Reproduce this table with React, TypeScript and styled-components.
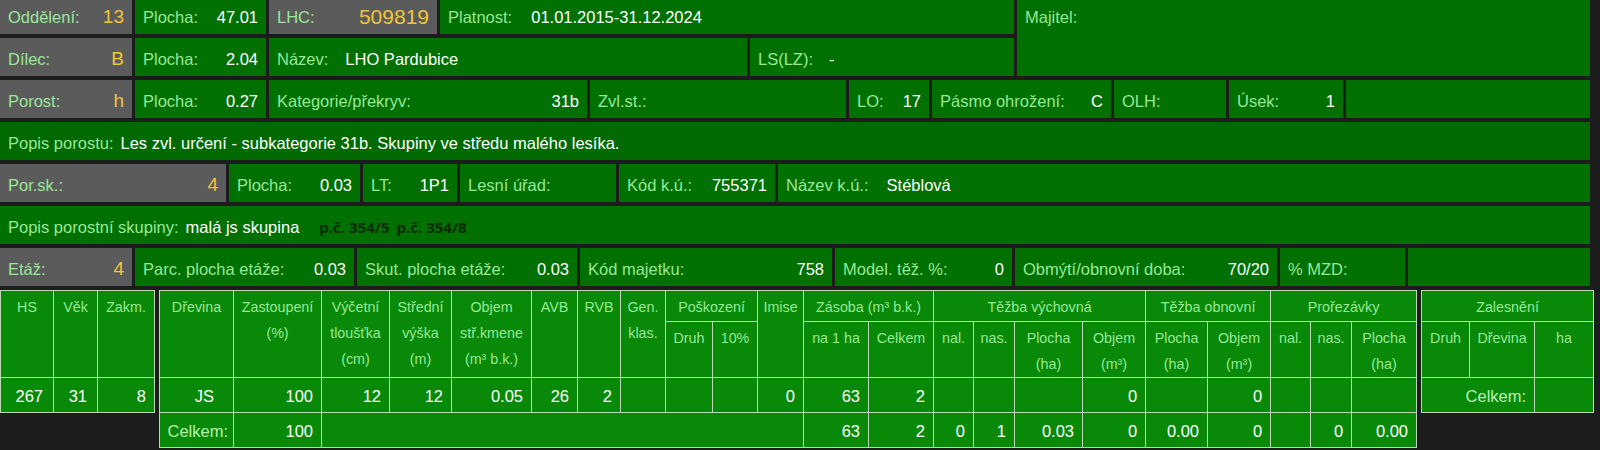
import React from 'react';
import styled, { createGlobalStyle } from 'styled-components';

const GlobalStyle = createGlobalStyle`
  html, body { margin: 0; padding: 0; background: #1c1c1c; overflow: hidden; }
  body { font-family: "Liberation Sans", Arial, sans-serif; }
`;

const LABEL = '#98e898';
const LINE = '#bcd8b8';

const Page = styled.div`
  width: 1590px;
  margin-top: -4px;
  display: flex;
  flex-direction: column;
  gap: 4px;
`;

const TopBlock = styled.div`
  display: flex;
  gap: 3px;
`;

const Stack = styled.div`
  display: flex;
  flex-direction: column;
  gap: 4px;
  width: 1014px;
`;

const Row = styled.div`
  display: flex;
  gap: 3px;
  height: 38px;
`;

type Tone = 'gray' | 'green' | 'deep';

const Cell = styled.div<{ $w?: number; $tone?: Tone; $split?: boolean; $gap?: number }>`
  flex: ${(p) => (p.$w ? `0 0 ${p.$w}px` : '1 1 0')};
  display: flex;
  align-items: center;
  justify-content: ${(p) => (p.$split ? 'space-between' : 'flex-start')};
  gap: ${(p) => p.$gap ?? 0}px;
  padding: 4px 8px 0 8px;
  box-sizing: border-box;
  background: ${(p) => (p.$tone === 'gray' ? '#5b5b5b' : p.$tone === 'deep' ? '#006a00' : '#007000')};
  font-size: 16.5px;
  white-space: nowrap;
  overflow: hidden;
`;

const OwnerCell = styled(Cell)`
  align-items: flex-start;
  padding-top: 12px;
`;

const Label = styled.span`
  color: ${LABEL};
`;

const Value = styled.span<{ $accent?: boolean; $size?: number }>`
  color: ${(p) => (p.$accent ? '#f2c437' : '#ffffff')};
  font-size: ${(p) => p.$size ?? 16.5}px;
`;

const Parcels = styled.span`
  display: inline-flex;
  gap: 7px;
  margin-left: 13px;
  font-family: "Open Sans", "DejaVu Sans", sans-serif;
  font-weight: 700;
  font-size: 15px;
  color: #0e2a04;
`;

const Tables = styled.div`
  display: flex;
  gap: 4px;
  align-items: flex-start;
`;

const Grid = styled.table<{ $w: number }>`
  width: ${(p) => p.$w}px;
  table-layout: fixed;
  border-collapse: collapse;
  background: #088a08;
  border: 1px solid ${LINE};
`;

const HeadRow = styled.tr<{ $h: number }>`
  height: ${(p) => p.$h}px;
`;

const BodyRow = styled.tr`
  height: 35px;
`;

const Th = styled.td`
  border: 1px solid ${LINE};
  color: ${LABEL};
  font-size: 14.3px;
  line-height: 26px;
  text-align: center;
  vertical-align: top;
  padding: 3px 0 0 0;
  white-space: nowrap;
  overflow: hidden;
`;

const Td = styled.td<{ $pr?: number; $label?: boolean }>`
  border: 1px solid ${LINE};
  color: ${(p) => (p.$label ? '#b8f0b0' : '#ffffff')};
  font-size: 16.5px;
  text-align: right;
  vertical-align: middle;
  padding: 2px ${(p) => p.$pr ?? 8}px 0 0;
  white-space: nowrap;
  overflow: hidden;
`;

type Pair = { w?: number; label?: string; value?: string; accent?: boolean; size?: number; tone?: Tone; inline?: number };

const Field: React.FC<Pair> = ({ w, label, value, accent, size, tone, inline }) => (
  <Cell $w={w} $tone={tone} $split={inline === undefined} $gap={inline}>
    {label && <Label>{label}</Label>}
    {value !== undefined && (
      <Value $accent={accent} $size={size}>
        {value}
      </Value>
    )}
  </Cell>
);

const mainCols = [74, 88, 68, 62, 80, 46, 43, 45, 47, 45, 46, 65, 65, 40, 41, 68, 63, 62, 63, 40, 41, 65];
const dataRow = ['JS', '100', '12', '12', '0.05', '26', '2', '', '', '', '0', '63', '2', '', '', '', '0', '', '0', '', '', ''];
const totalTail = ['63', '2', '0', '1', '0.03', '0', '0.00', '0', '', '0', '0.00'];

const Br = () => <br />;

export default function App() {
  return (
    <>
      <GlobalStyle />
      <Page>
        <TopBlock>
          <Stack>
            <Row>
              <Field w={132} tone="gray" label="Oddělení:" value="13" accent size={19} />
              <Field w={131} label="Plocha:" value="47.01" />
              <Field w={168} tone="gray" label="LHC:" value="509819" accent size={21} />
              <Field label="Platnost:" value="01.01.2015-31.12.2024" inline={19} />
            </Row>
            <Row>
              <Field w={132} tone="gray" label="Dílec:" value="B" accent size={19} />
              <Field w={131} label="Plocha:" value="2.04" />
              <Field w={478} label="Název:" value="LHO Pardubice" inline={17} />
              <Field label="LS(LZ):" value="-" inline={16} />
            </Row>
          </Stack>
          <OwnerCell>
            <Label>Majitel:</Label>
          </OwnerCell>
        </TopBlock>
        <Row>
          <Field w={132} tone="gray" label="Porost:" value="h" accent size={19} />
          <Field w={131} label="Plocha:" value="0.27" />
          <Field w={318} label="Kategorie/překryv:" value="31b" />
          <Field w={256} label="Zvl.st.:" inline={0} />
          <Field w={80} label="LO:" value="17" />
          <Field w={179} label="Pásmo ohrožení:" value="C" />
          <Field w={112} label="OLH:" inline={0} />
          <Field w={114} label="Úsek:" value="1" />
          <Field inline={0} />
        </Row>
        <Row>
          <Field tone="deep" label="Popis porostu:" value="Les zvl. určení - subkategorie 31b. Skupiny ve středu malého lesíka." inline={7} />
        </Row>
        <Row>
          <Field w={226} tone="gray" label="Por.sk.:" value="4" accent size={19} />
          <Field w={131} label="Plocha:" value="0.03" />
          <Field w={94} label="LT:" value="1P1" />
          <Field w={156} label="Lesní úřad:" inline={0} />
          <Field w={156} label="Kód k.ú.:" value="755371" />
          <Field label="Název k.ú.:" value="Stéblová" inline={18} />
        </Row>
        <Row>
          <Cell $gap={7}>
            <Label>Popis porostní skupiny:</Label>
            <Value>malá js skupina</Value>
            <Parcels>
              <span>p.č. 354/5</span>
              <span>p.č. 354/8</span>
            </Parcels>
          </Cell>
        </Row>
        <Row>
          <Field w={132} tone="gray" label="Etáž:" value="4" accent size={19} />
          <Field w={219} label="Parc. plocha etáže:" value="0.03" />
          <Field w={220} label="Skut. plocha etáže:" value="0.03" />
          <Field w={252} label="Kód majetku:" value="758" />
          <Field w={177} label="Model. těž. %:" value="0" />
          <Field w={262} label="Obmýtí/obnovní doba:" value="70/20" />
          <Field w={125} label="% MZD:" inline={0} />
          <Field inline={0} />
        </Row>

        <Tables>
          <Grid $w={154}>
            <colgroup>
              <col style={{ width: 53 }} />
              <col style={{ width: 44 }} />
              <col style={{ width: 57 }} />
            </colgroup>
            <tbody>
              <HeadRow $h={87}>
                <Th>HS</Th>
                <Th>Věk</Th>
                <Th>Zakm.</Th>
              </HeadRow>
              <BodyRow>
                <Td $pr={10}>267</Td>
                <Td $pr={10}>31</Td>
                <Td>8</Td>
              </BodyRow>
            </tbody>
          </Grid>

          <Grid $w={1257}>
            <colgroup>
              {mainCols.map((w, i) => (
                <col key={i} style={{ width: w }} />
              ))}
            </colgroup>
            <tbody>
              <HeadRow $h={31}>
                <Th rowSpan={2}>Dřevina</Th>
                <Th rowSpan={2}>
                  Zastoupení<Br />(%)
                </Th>
                <Th rowSpan={2}>
                  Výčetní<Br />tloušťka<Br />(cm)
                </Th>
                <Th rowSpan={2}>
                  Střední<Br />výška<Br />(m)
                </Th>
                <Th rowSpan={2}>
                  Objem<Br />stř.kmene<Br />(m³ b.k.)
                </Th>
                <Th rowSpan={2}>AVB</Th>
                <Th rowSpan={2}>RVB</Th>
                <Th rowSpan={2}>
                  Gen.<Br />klas.
                </Th>
                <Th colSpan={2}>Poškození</Th>
                <Th rowSpan={2}>Imise</Th>
                <Th colSpan={2}>Zásoba (m³ b.k.)</Th>
                <Th colSpan={4}>Těžba výchovná</Th>
                <Th colSpan={2}>Těžba obnovní</Th>
                <Th colSpan={3}>Prořezávky</Th>
              </HeadRow>
              <HeadRow $h={56}>
                <Th>Druh</Th>
                <Th>10%</Th>
                <Th>na 1 ha</Th>
                <Th>Celkem</Th>
                <Th>nal.</Th>
                <Th>nas.</Th>
                <Th>
                  Plocha<Br />(ha)
                </Th>
                <Th>
                  Objem<Br />(m³)
                </Th>
                <Th>
                  Plocha<Br />(ha)
                </Th>
                <Th>
                  Objem<Br />(m³)
                </Th>
                <Th>nal.</Th>
                <Th>nas.</Th>
                <Th>
                  Plocha<Br />(ha)
                </Th>
              </HeadRow>
              <BodyRow>
                {dataRow.map((v, i) => (
                  <Td key={i} $pr={i === 0 ? 19 : 8}>
                    {v}
                  </Td>
                ))}
              </BodyRow>
              <BodyRow>
                <Td $label $pr={5}>
                  Celkem:
                </Td>
                <Td>100</Td>
                <Td colSpan={9} />
                {totalTail.map((v, i) => (
                  <Td key={i}>{v}</Td>
                ))}
              </BodyRow>
            </tbody>
          </Grid>

          <Grid $w={172}>
            <colgroup>
              <col style={{ width: 48 }} />
              <col style={{ width: 65 }} />
              <col style={{ width: 59 }} />
            </colgroup>
            <tbody>
              <HeadRow $h={31}>
                <Th colSpan={3}>Zalesnění</Th>
              </HeadRow>
              <HeadRow $h={56}>
                <Th>Druh</Th>
                <Th>Dřevina</Th>
                <Th>ha</Th>
              </HeadRow>
              <BodyRow>
                <Td colSpan={2} $label $pr={8}>
                  Celkem:
                </Td>
                <Td />
              </BodyRow>
            </tbody>
          </Grid>
        </Tables>
      </Page>
    </>
  );
}
